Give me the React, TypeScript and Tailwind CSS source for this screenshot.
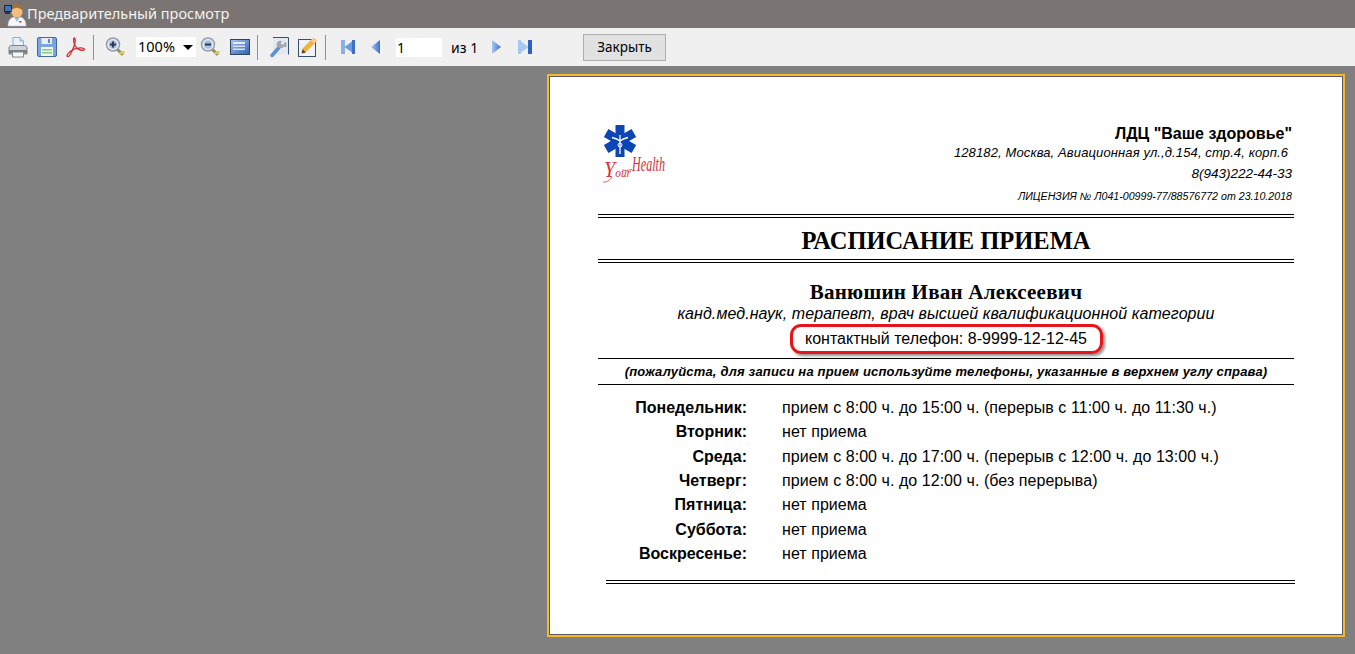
const ui = { fontFamily: '"Noto Sans", "Open Sans", sans-serif' };

function PersonIcon() {
  return (
    <svg width="24" height="26" viewBox="0 0 24 26" className="shrink-0">
      <rect x="1.500" y="4.500" width="7" height="6" fill="#3f74b8" stroke="#18243e" strokeWidth="1" />
      <rect x="2" y="11" width="5" height="2" fill="#27344e" />
      <circle cx="14" cy="11" r="5.500" fill="#f5bd80" />
      <path d="M8.500 10c0-5 3-6.500 6-6.500s5 2 5 6c-2-2-5-3-7-2.500-1 .3-3 1-4 3z" fill="#a8702e" />
      <path d="M5 25c0-6 3-8.500 6-9l3 2 3-2c3 .5 6 3 6 9z" fill="#f6f8fb" stroke="#b9c4d8" strokeWidth=".6" />
      <path d="M11 16l3 2 3-2-3 5z" fill="#9cc0e6" />
      <rect x="16" y="20" width="2.500" height="1.500" fill="#d8403c" />
    </svg>
  );
}

function PrinterIcon() {
  return (
    <svg width="20" height="21" viewBox="0 0 20 21">
      <path d="M5 .5h7l3.500 3.500v8h-10.500z" fill="#eaf2fb" stroke="#85aedd" />
      <path d="M12 .5v3.500h3.500" fill="#c9dcf2" stroke="#85aedd" />
      <path d="M1 11c0-1.500 1-2.500 2.500-2.500h13c1.500 0 2.500 1 2.500 2.500v6h-18z" fill="#cfd2d6" stroke="#7d8287" />
      <rect x="1" y="13" width="18" height="3.500" fill="#7b8086" />
      <rect x="4.500" y="15" width="11" height="5" fill="#f6f7f8" stroke="#868b90" />
    </svg>
  );
}

function SaveIcon() {
  return (
    <svg width="20" height="20" viewBox="0 0 20 20">
      <rect x=".5" y=".5" width="19" height="19" rx="1.500" fill="#7ba5de" stroke="#46689e" />
      <rect x="4.500" y="1" width="10.500" height="6" fill="#e8eff9" />
      <rect x="11" y="2" width="2" height="4" fill="#5f88c0" />
      <rect x="4" y="10" width="12" height="9" fill="#f1f5f0" />
      <rect x="5" y="12" width="10" height="1.500" fill="#8ac886" />
      <rect x="5" y="15" width="10" height="1.500" fill="#8ac886" />
    </svg>
  );
}

function PdfIcon() {
  return (
    <svg width="20" height="20" viewBox="0 0 20 20" fill="none">
      <path d="M8.500 1c-1.500 0-1 4 0 6.500 1.500 3.500 3.500 5 6 5.500 2.500.5 4 .3 4-.7 0-1.300-3-1.500-6-1.200-4 .4-7 2-9.500 4.500-2 2-2.500 3.500-1.500 4 1.300.5 3-2 4.500-5.500 1.500-3.500 3.500-8 3.300-11.500 0-.4-.3-.6-.8-.6z" stroke="#dc2a34" strokeWidth="1.300" />
    </svg>
  );
}

function ZoomIcon({ plus }: { plus: boolean }) {
  return (
    <svg width="21" height="20" viewBox="0 0 21 20">
      <path d="M12.500 12.500l4.500 4.500" stroke="#8f8a62" strokeWidth="3" strokeLinecap="round" />
      <path d="M14.500 16.500l5-1.500" stroke="#d9c766" strokeWidth="2.500" />
      <circle cx="8" cy="7.500" r="6.500" fill="#e6ebf3" stroke="#979ea8" strokeWidth="1.500" />
      <circle cx="8" cy="7.500" r="4.200" fill="#a7bfe2" />
      <rect x="5" y="6.500" width="6" height="2" fill="#2e3a56" />
      {plus ? <rect x="7" y="4.500" width="2" height="6" fill="#2e3a56" /> : null}
    </svg>
  );
}

function PageWidthIcon() {
  return (
    <svg width="20" height="16" viewBox="0 0 20 16">
      <defs>
        <linearGradient id="pagefill" x1="0" y1="0" x2="1" y2="1">
          <stop offset="0" stopColor="#a9c4ee" />
          <stop offset="1" stopColor="#2f5fb4" />
        </linearGradient>
      </defs>
      <rect x=".5" y=".5" width="19" height="15" fill="url(#pagefill)" stroke="#2f4466" />
      <rect x="3" y="3" width="12" height="2" fill="#e3ecf9" />
      <rect x="3" y="6.500" width="12" height="1.500" fill="#d6e3f6" />
      <rect x="3" y="9.500" width="12" height="1.500" fill="#d6e3f6" />
    </svg>
  );
}

function WrenchIcon() {
  return (
    <svg width="20" height="21" viewBox="0 0 20 21">
      <path d="M4 .5h15.500v17H4z" fill="#e4e8f0" />
      <path d="M4 .5h15.500v17" fill="none" stroke="#38506f" />
      <path d="M3 18.500l6.500-7.500" stroke="#5b8fd8" strokeWidth="3.500" strokeLinecap="round" />
      <circle cx="11.500" cy="7.500" r="3.800" fill="#a3a8b0" />
      <rect x="12" y="4.500" width="5" height="3" fill="#e4e8f0" />
      <rect x="15" y="5.500" width="2.500" height="4.500" fill="#a6abb3" />
    </svg>
  );
}

function EditIcon() {
  return (
    <svg width="21" height="20" viewBox="0 0 21 20">
      <rect x=".5" y="2.500" width="17" height="17" fill="#f0f2f7" stroke="#38506f" />
      <path d="M6 13.500l9-9" stroke="#efb340" strokeWidth="5" />
      <path d="M14.500 5l3-3" stroke="#f2c9a0" strokeWidth="5" />
      <path d="M3.500 16.500l1-4.500 3.500 3.500z" fill="#6a3f16" />
    </svg>
  );
}

function NavIcon({ dir, edge }: { dir: "left" | "right"; edge: boolean }) {
  return (
    <svg width={edge ? 14 : 10} height="16" viewBox={edge ? "0 0 14 16" : "0 0 10 16"}>
      <defs>
        <linearGradient id="navfill" x1="0" y1="0" x2="1" y2="0">
          <stop offset="0" stopColor="#a8c8f0" />
          <stop offset="1" stopColor="#3a70cc" />
        </linearGradient>
      </defs>
      {edge ? (
        <g transform={dir === "right" ? "matrix(-1 0 0 1 14 0)" : undefined}>
          <rect x="0" y="1" width="4" height="14" fill={dir === "right" ? "#2c62c2" : "#8ab0e6"} />
          <path d="M3.500 8L13 1v14z" fill={dir === "right" ? "#a8c8f0" : "#6c9be0"} />
          <rect x="11" y="1" width="3" height="14" fill={dir === "right" ? "#a8c8f0" : "#3a70cc"} />
        </g>
      ) : (
        <path d={dir === "left" ? "M0 8l9-7v14z" : "M10 8L1 1v14z"} fill="url(#navfill)" />
      )}
    </svg>
  );
}

function Sep() {
  return <div className="w-px h-[25px] bg-[#8f8f8f]" />;
}

function Logo() {
  return (
    <svg width="66" height="60" viewBox="0 0 66 60" className="shrink-0">
      <g fill="#0c46b4">
        <path d="M12.500 0h9v12l-1 8h-7l-1-8z" />
        <path d="M12.500 0h9v12l-1 8h-7l-1-8z" transform="rotate(60 17 16)" />
        <path d="M12.500 0h9v12l-1 8h-7l-1-8z" transform="rotate(120 17 16)" />
        <path d="M12.500 0h9v12l-1 8h-7l-1-8z" transform="rotate(180 17 16)" />
        <path d="M12.500 0h9v12l-1 8h-7l-1-8z" transform="rotate(240 17 16)" />
        <path d="M12.500 0h9v12l-1 8h-7l-1-8z" transform="rotate(300 17 16)" />
      </g>
      <path d="M17 10v19M9 12.500c4 1 5.500 1.500 8 3.500 2.500-2 4-2.500 8-3.500" stroke="#fff" strokeWidth="1.300" fill="none" />
      <circle cx="17" cy="20" r="2" fill="none" stroke="#fff" strokeWidth="1" />
      <path d="M0 57c3 .5 6-1 9-5M19 45c3 .5 6 .5 10-.5" stroke="#d8303c" strokeWidth=".8" fill="none" />
      <text x="1" y="52" textLength="27" lengthAdjust="spacingAndGlyphs" fontFamily='"Liberation Serif", serif' fontStyle="italic" fill="#d8303c">
        <tspan fontSize="23">Y</tspan>
        <tspan fontSize="13">our</tspan>
      </text>
      <text x="29" y="46" textLength="33" lengthAdjust="spacingAndGlyphs" fontFamily='"Liberation Serif", serif' fontStyle="italic" fontSize="20" fill="#d8303c">
        Health
      </text>
    </svg>
  );
}

function DoubleRule({ className }: { className: string }) {
  return <div className={`h-[4px] border-y border-black ${className}`} />;
}

const schedule = [
  ["Понедельник:", "прием с 8:00 ч. до 15:00 ч. (перерыв с 11:00 ч. до 11:30 ч.)"],
  ["Вторник:", "нет приема"],
  ["Среда:", "прием с 8:00 ч. до 17:00 ч. (перерыв с 12:00 ч. до 13:00 ч.)"],
  ["Четверг:", "прием с 8:00 ч. до 12:00 ч. (без перерыва)"],
  ["Пятница:", "нет приема"],
  ["Суббота:", "нет приема"],
  ["Воскресенье:", "нет приема"],
];

export default function App() {
  return (
    <div className="h-[654px] w-[1355px] overflow-hidden bg-[#808080] flex flex-col">
      <div className="h-[28px] bg-[#7a7573] flex items-center pl-[3px] text-[14.5px] text-[#f2f2f2]" style={ui}>
        <PersonIcon />
        <span>Предварительный просмотр</span>
      </div>

      <div className="h-[38px] bg-[#f0f0f0] flex items-center pl-[8px] text-[14px] text-black" style={ui}>
        <PrinterIcon />
        <div className="ml-[9px]"><SaveIcon /></div>
        <div className="ml-[9px]"><PdfIcon /></div>
        <div className="ml-[7px]"><Sep /></div>
        <div className="ml-[11px]"><ZoomIcon plus /></div>
        <div className="ml-[10px] w-[60px] h-[20px] bg-white flex items-center justify-between pl-[2px] pr-[3px] text-[14.5px]">
          <span>100%</span>
          <span className="w-0 h-0 border-x-[5px] border-x-transparent border-t-[5px] border-t-black" />
        </div>
        <div className="ml-[4px]"><ZoomIcon plus={false} /></div>
        <div className="ml-[9px]"><PageWidthIcon /></div>
        <div className="ml-[7px]"><Sep /></div>
        <div className="ml-[11px]"><WrenchIcon /></div>
        <div className="ml-[9px]"><EditIcon /></div>
        <div className="ml-[6px]"><Sep /></div>
        <div className="ml-[15px]"><NavIcon dir="left" edge /></div>
        <div className="ml-[16px]"><NavIcon dir="left" edge={false} /></div>
        <div className="ml-[15px] w-[46px] h-[19px] bg-white flex items-center pl-[1px]">1</div>
        <span className="ml-[9px] w-[26px] whitespace-nowrap">из 1</span>
        <div className="ml-[14px]"><NavIcon dir="right" edge={false} /></div>
        <div className="ml-[17px]"><NavIcon dir="right" edge /></div>
        <button className="ml-[51px] w-[83px] h-[27px] bg-[#e1e1e1] border border-[#adadad] flex items-center justify-center text-[13.5px]" type="button">
          Закрыть
        </button>
      </div>

      <div className="flex-1 pl-[547px] pt-[8px]">
        <div className="w-[798px] h-[563px] border-2 border-[#f5b82e]">
          <div
            className="h-full border border-[#5a5a5a] bg-white px-[48px] text-black flex flex-col"
            style={{ fontFamily: '"Liberation Sans", Arial, sans-serif' }}
          >
            <div className="h-[137px] flex items-start pt-[48px]">
              <div className="ml-[5px]"><Logo /></div>
              <div className="flex-1 flex flex-col items-end pr-[2px] italic">
                <div className="text-[16px] font-bold not-italic leading-[18px]">ЛДЦ "Ваше здоровье"</div>
                <div className="text-[13px] leading-[18px] mt-[1px] mr-[4px] tracking-[0.12px]">128182, Москва, Авиационная ул.,д.154, стр.4, корп.6</div>
                <div className="text-[13.500px] leading-[18px] mt-[3px]">8(943)222-44-33</div>
                <div className="text-[10.650px] leading-[14px] mt-[6px]">ЛИЦЕНЗИЯ № Л041-00999-77/88576772 от 23.10.2018</div>
              </div>
            </div>
            <DoubleRule className="" />
            <div className="h-[41px] pt-[6px] flex items-center justify-center text-[24.500px] font-bold" style={{ fontFamily: '"Liberation Serif", serif' }}>
              РАСПИСАНИЕ ПРИЕМА
            </div>
            <DoubleRule className="" />
            <div className="mt-[17px] text-center text-[21px] leading-[24px] font-bold tracking-[0.25px]" style={{ fontFamily: '"Liberation Serif", serif' }}>
              Ванюшин Иван Алексеевич
            </div>
            <div className="text-center text-[16px] italic leading-[18px] mt-[1px] tracking-[0.08px]">канд.мед.наук, терапевт, врач высшей квалификационной категории</div>
            <div className="flex justify-center mt-[1px]">
              <div className="w-[313px] h-[30px] border-[3px] border-[#e8141c] rounded-[11px] shadow-[2px_2px_3px_rgba(0,0,0,0.45)] flex items-center justify-center text-[16px]">
                контактный телефон: 8-9999-12-12-45
              </div>
            </div>
            <div className="mt-[4px] h-[27px] border-y border-black flex items-center justify-center text-[13px] font-bold italic tracking-[0.18px] whitespace-nowrap">
              (пожалуйста, для записи на прием используйте телефоны, указанные в верхнем углу справа)
            </div>
            <div className="mt-[10.600px] flex flex-col text-[16px]">
              {schedule.map(([day, hours]) => (
                <div key={day} className="h-[24.400px] flex items-center">
                  <div className="w-[149px] text-right font-bold">{day}</div>
                  <div className="ml-[35px] tracking-[0.05px]">{hours}</div>
                </div>
              ))}
            </div>
            <DoubleRule className="ml-[8px] mr-[-1px] mt-[13.400px]" />
          </div>
        </div>
      </div>
    </div>
  );
}
